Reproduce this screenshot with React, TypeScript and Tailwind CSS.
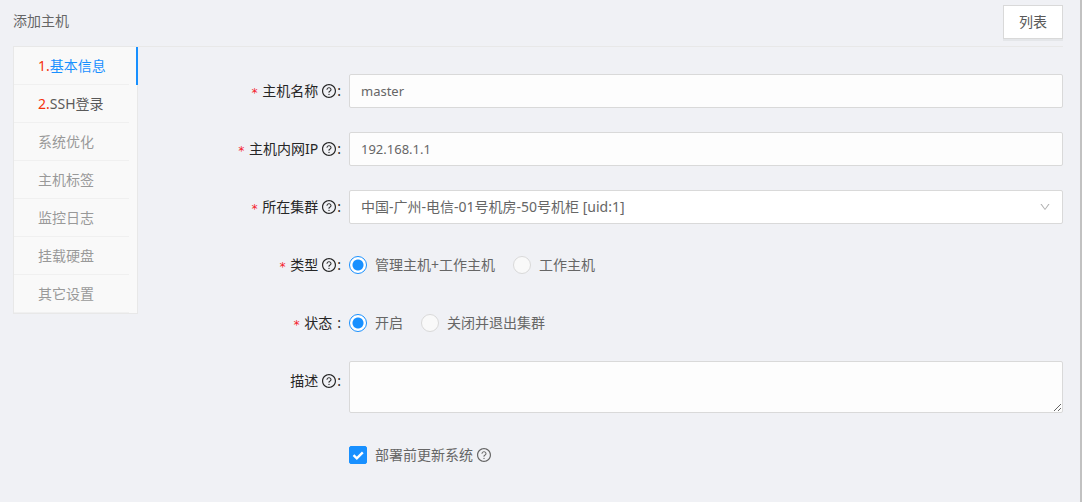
import React from 'react';
import { AiOutlineDown, AiOutlineQuestionCircle } from 'react-icons/ai';

const steps = [
  { label: '基本信息', index: '1.', active: true },
  { label: 'SSH登录', index: '2.' },
  { label: '系统优化', disabled: true },
  { label: '主机标签', disabled: true },
  { label: '监控日志', disabled: true },
  { label: '挂载硬盘', disabled: true },
  { label: '其它设置', disabled: true },
];

const StepMenu: React.FC = () => {
  return (
    <nav className="w-[125px] shrink-0 border border-[#e8e8e8] bg-[#f9f9f9]">
      <ul>
        {steps.map((step) => (
          <li
            key={step.label}
            className={step.active ? 'relative after:absolute after:inset-y-0 after:-right-px after:w-0.5 after:bg-[#1890ff]' : ''}
          >
            <button
              type="button"
              disabled={step.disabled}
              className={
                'mr-2 flex h-[38px] w-[115px] items-center border-b border-[#f0f0f0] pl-6 text-left ' +
                (step.disabled ? 'text-[#999999]' : step.active ? 'text-[#1890ff]' : 'text-[#595959]')
              }
            >
              {step.index && <span className="text-[#f5320d]">{step.index}</span>}
              {step.label}
            </button>
          </li>
        ))}
      </ul>
    </nav>
  );
};

type FormRowProps = {
  label: string;
  htmlFor?: string;
  required?: boolean;
  help?: boolean;
  children: React.ReactNode;
};

const FormRow: React.FC<FormRowProps> = ({ label, htmlFor, required, help, children }) => {
  return (
    <div className="flex items-start">
      <label
        htmlFor={htmlFor}
        className="mr-2 flex h-10 w-[203px] shrink-0 items-center justify-end text-[#262626]"
      >
        {required && <span className="mr-1 pt-1 font-['DejaVu_Sans_Mono'] text-xs text-[#f5222d]">*</span>}
        {label}
        {help ? <AiOutlineQuestionCircle className="ml-[3px] size-4" /> : <span className="w-1" />}
        <span className={help ? '' : 'ml-px'}>:</span>
      </label>
      <div className="flex min-h-10 min-w-0 flex-1 items-center">{children}</div>
    </div>
  );
};

type RadioProps = {
  name: string;
  label: string;
  defaultChecked?: boolean;
};

const Radio: React.FC<RadioProps> = ({ name, label, defaultChecked }) => {
  return (
    <label className="flex items-center gap-2">
      <input
        type="radio"
        name={name}
        defaultChecked={defaultChecked}
        className="size-[18px] appearance-none rounded-full border border-[#d9d9d9] bg-[#f9f9f9] checked:border-[#1890ff] checked:bg-[radial-gradient(circle,#1890ff_5px,#ffffff_6px)]"
      />
      {label}
    </label>
  );
};

const fieldClass = 'block w-full rounded-[2px] border border-[#d9d9d9] px-[11px] outline-none';

export default function App() {
  return (
    <div className="min-h-screen border-r-2 border-[#c1c1c1] bg-[#f0f1f5] pr-[17px] pl-[13px] font-['Noto_Sans','Noto_Sans_CJK_SC',sans-serif] text-sm text-[#666666]">
      <header className="flex h-[46px] items-center justify-between pb-0.5">
        <h1 className="pb-0.5">添加主机</h1>
        <button
          type="button"
          className="h-[34px] w-[60px] border border-[#d9d9d9] bg-white text-[#595959] shadow-[0_2px_0_#e4e6e9]"
        >
          列表
        </button>
      </header>
      <div className="flex items-start">
        <StepMenu />
        <form className="flex min-w-0 flex-1 flex-col gap-[18px] border-t border-[#e8e8e8] pt-6">
          <FormRow label="主机名称" htmlFor="name" required help>
            <input
              id="name"
              type="text"
              defaultValue="master"
              className={`${fieldClass} h-[34px] bg-[#fdfdfd] text-[13px]`}
            />
          </FormRow>
          <FormRow label="主机内网IP" htmlFor="ip" required help>
            <input
              id="ip"
              type="text"
              defaultValue="192.168.1.1"
              className={`${fieldClass} h-[34px] bg-[#fdfdfd] text-[13px]`}
            />
          </FormRow>
          <FormRow label="所在集群" htmlFor="cluster" required help>
            <div className="relative w-full">
              <select id="cluster" className={`${fieldClass} h-[34px] appearance-none bg-white`}>
                <option>中国-广州-电信-01号机房-50号机柜 [uid:1]</option>
              </select>
              <AiOutlineDown className="pointer-events-none absolute inset-y-0 right-3 my-auto size-3 text-[#b0b0b0]" />
            </div>
          </FormRow>
          <FormRow label="类型" required help>
            <div className="flex items-center gap-[18px]">
              <Radio name="type" label="管理主机+工作主机" defaultChecked />
              <Radio name="type" label="工作主机" />
            </div>
          </FormRow>
          <FormRow label="状态" required>
            <div className="flex items-center gap-[18px]">
              <Radio name="status" label="开启" defaultChecked />
              <Radio name="status" label="关闭并退出集群" />
            </div>
          </FormRow>
          <FormRow label="描述" htmlFor="remark" help>
            <textarea id="remark" className={`${fieldClass} mb-1 h-[52px] resize-y bg-[#fdfdfd] py-1`} />
          </FormRow>
          <div className="flex h-10 items-center pl-[211px]">
            <label className="flex items-center gap-2">
              <span className="relative flex">
                <input
                  type="checkbox"
                  defaultChecked
                  className="peer size-[18px] appearance-none rounded-[2px] border border-[#d9d9d9] bg-white checked:border-[#1890ff] checked:bg-[#1890ff]"
                />
                <svg
                  viewBox="0 0 18 18"
                  className="pointer-events-none absolute inset-0 hidden size-[18px] fill-none stroke-white stroke-[2.4] peer-checked:block"
                >
                  <path d="M4.5 9.2 L7.8 12.4 L13.8 6.4" />
                </svg>
              </span>
              部署前更新系统
            </label>
            <AiOutlineQuestionCircle className="ml-[3px] size-4" />
          </div>
        </form>
      </div>
    </div>
  );
}
